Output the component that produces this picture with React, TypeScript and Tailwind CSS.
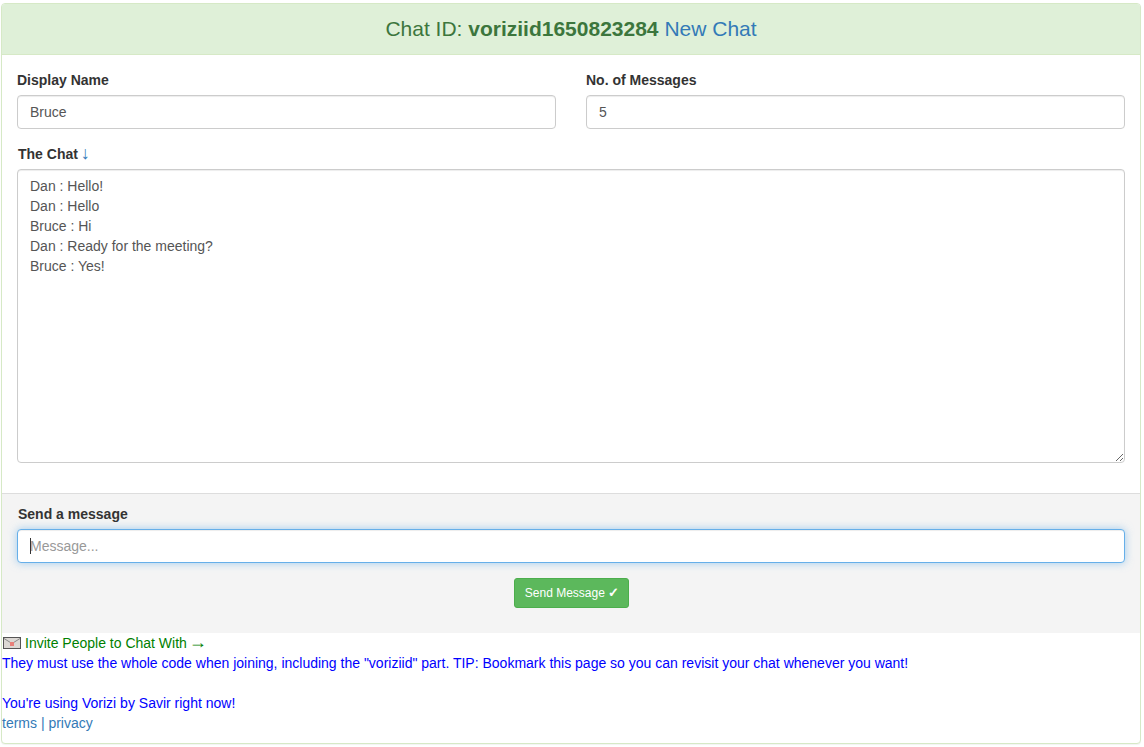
import React from 'react';

const App: React.FC = () => {
  return (
    <div className="min-h-[747px] bg-white pt-[3px] pl-px pr-[3px] font-['Liberation_Sans',Arial,sans-serif] text-[14px] leading-[20px] text-[#333]">
      <div className="rounded-[4px] border border-[#d6e9c6] bg-white shadow-[0_1px_1px_rgba(0,0,0,0.05)]">
        {/* Heading */}
        <div className="flex h-[51px] items-center justify-center rounded-t-[3px] border-b border-[#d6e9c6] bg-[#dff0d8] text-[21px] text-[#3c763d]">
          <span>
            Chat ID: <b>voriziid1650823284</b> <a className="text-[#337ab7]">New Chat</a>
          </span>
        </div>

        {/* Name + count + chat */}
        <div className="px-[15px] pt-[15px] pb-[30px]">
          <div className="grid grid-cols-2 gap-[30px]">
            <div>
              <label className="mb-[5px] block font-bold">Display Name</label>
              <input
                defaultValue="Bruce"
                className="block h-[34px] w-full rounded-[4px] border border-[#ccc] bg-white px-3 text-[14px] text-[#555] shadow-[inset_0_1px_1px_rgba(0,0,0,0.075)] outline-none"
              />
            </div>
            <div>
              <label className="mb-[5px] block font-bold">No. of Messages</label>
              <input
                defaultValue="5"
                className="block h-[34px] w-full rounded-[4px] border border-[#ccc] bg-white px-3 text-[14px] text-[#555] shadow-[inset_0_1px_1px_rgba(0,0,0,0.075)] outline-none"
              />
            </div>
          </div>
          <label className="mt-[15px] mb-[5px] block h-5 pl-px font-bold">
            The Chat <span className="-ml-px text-[18px] leading-[0] font-normal text-[#337ab7]">↓</span>
          </label>
          <textarea
            readOnly
            defaultValue={'Dan : Hello!\nDan : Hello\nBruce : Hi\nDan : Ready for the meeting?\nBruce : Yes!'}
            className="block h-[294px] w-full resize rounded-[4px] border border-[#ccc] bg-white px-3 py-[6px] text-[14px] leading-[20px] text-[#555] shadow-[inset_0_1px_1px_rgba(0,0,0,0.075)] outline-none"
          />
        </div>

        {/* Send a message */}
        <div className="h-[140px] border-t border-[#ddd] bg-[#f4f4f4] px-[15px] pt-[10px]">
          <label className="mb-[5px] block pl-px font-bold">Send a message</label>
          <div className="relative">
            <input
              placeholder="Message..."
              className="block h-[34px] w-full rounded-[4px] border border-[#66afe9] bg-white px-3 text-[14px] text-[#555] shadow-[inset_0_1px_1px_rgba(0,0,0,0.075),0_0_8px_rgba(102,175,233,0.6)] outline-none placeholder:text-[#999]"
            />
            <span className="absolute top-[9px] left-[13px] h-[16px] w-px bg-[#333]" />
          </div>
          <div className="mt-[15px] flex justify-center">
            <button className="h-[30px] w-[115px] rounded-[3px] border border-[#4cae4c] bg-[#5cb85c] pl-[2px] text-[12px] leading-[18px] whitespace-nowrap text-white">
              Send Message <span className="font-bold text-[13px] leading-[0]">✓</span>
            </button>
          </div>
        </div>

        {/* Footer */}
        <div className="pb-[10px]">
          <div className="flex h-5 items-center text-[#008000]">
            <svg width="18" height="12" viewBox="0 0 18 12" className="mr-[4px] ml-px">
              <rect x="0.5" y="0.5" width="17" height="11" fill="#dcd8d4" stroke="#555" />
              <path d="M1 1.5l8 5 8-5" fill="none" stroke="#8a8a8a" />
              <rect x="7" y="5" width="4" height="4" fill="#e8807a" />
            </svg>
            <span>
              Invite People to Chat With <span className="-ml-[2px] text-[18px] leading-[0]">→</span>
            </span>
          </div>
          <div className="text-[#0000ff]">
            They must use the whole code when joining, including the "voriziid" part. TIP: Bookmark this page so you can revisit your chat whenever you want!
          </div>
          <div className="h-5" />
          <div className="text-[#0000ff]">You're using Vorizi by Savir right now!</div>
          <div className="text-[#337ab7]">
            <a>terms</a> | <a>privacy</a>
          </div>
        </div>
      </div>
    </div>
  );
};

export default App;
